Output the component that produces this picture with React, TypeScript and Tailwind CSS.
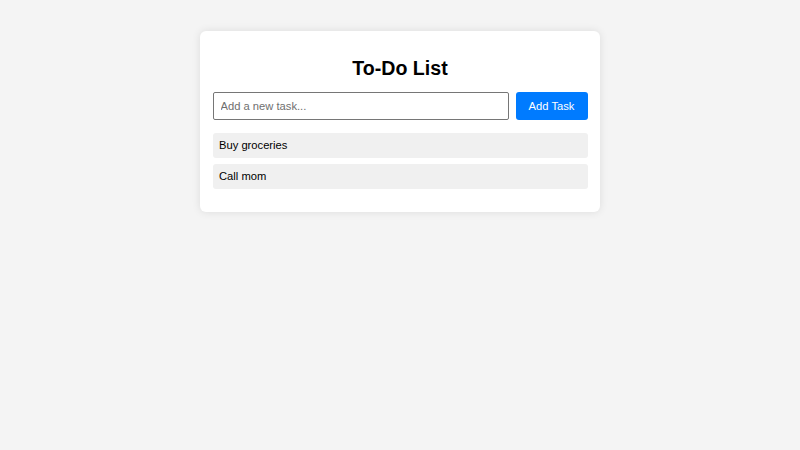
import React from "react";

export default function App() {
  const tasks = ["Buy groceries", "Call mom"];
  return (
    <div
      className="min-h-[450px] w-full bg-[#f4f4f4] pt-[31px]"
      style={{ fontFamily: '"Liberation Sans", Arial, sans-serif' }}
    >
      <div className="mx-auto w-[400px] rounded-[6px] bg-white px-[12.5px] pt-[26px] pb-[23px] shadow-[0_0_8px_rgba(0,0,0,0.1)]">
        <h1 className="text-center text-[19.6px] leading-[22px] font-bold text-black">To-Do List</h1>
        <div className="mt-[13px] flex gap-[6.5px]">
          <input
            type="text"
            placeholder="Add a new task..."
            className="h-[28px] min-w-0 flex-1 rounded-[2px] border border-[#767676] bg-white px-[7px] text-[11.2px] text-black placeholder:text-[#6f6f6f] outline-none"
          />
          <button className="h-[28px] w-[72px] rounded-[3px] bg-[#007bff] text-[11.2px] text-white">
            Add Task
          </button>
        </div>
        <ul className="mt-[13px] flex flex-col gap-[6px]">
          {tasks.map((t) => (
            <li
              key={t}
              className="flex h-[25px] items-center rounded-[3px] bg-[#f0f0f0] px-[6.5px] text-[11.2px] text-black"
            >
              {t}
            </li>
          ))}
        </ul>
      </div>
    </div>
  );
}
